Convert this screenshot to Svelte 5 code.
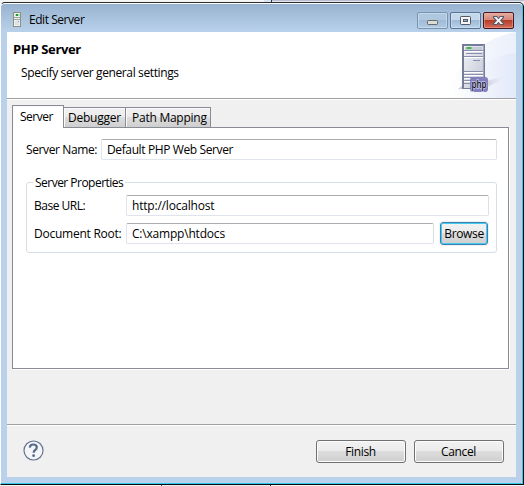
<script>
  let name = $state('Default PHP Web Server');
  let url = $state('http://localhost');
  let root = $state('C:\\xampp\\htdocs');
</script>

<div class="desktop">
  <div class="behind"><i></i><b></b></div>
  <section class="window">
    <header class="titlebar">
      <svg class="appicon" width="9" height="16" viewBox="0 0 9 16" shape-rendering="crispEdges">
        <rect x=".5" y=".5" width="7" height="14" rx="1" fill="#edf1ed" stroke="#8c917c" />
        <path d="M2 2h5v2H2z" fill="#b9dcb5" /><path d="M3 2h2v2H3z" fill="#189a36" />
        <path d="M1 5h6v1H1zM1 7h6v1H1z" fill="#9ba69a" />
        <path d="M2 9h4v4H2z" fill="#dce1e6" /><path d="M5 9h1v1H5z" fill="#8793a0" />
      </svg>
      <span class="caption">Edit Server</span>
      <div class="controls">
        <button class="ctl min" aria-label="Minimize"><svg width="29" height="15" viewBox="0 0 29 15"><rect x="9.5" y="7.5" width="10" height="4" rx=".7" fill="#deddd5" stroke="#676a6c" /></svg></button>
        <button class="ctl" aria-label="Maximize"><svg width="29" height="15" viewBox="0 0 29 15"><rect x="9.5" y="3.5" width="10" height="8" rx=".8" fill="#f5f5f5" stroke="#535866" /><rect x="12.5" y="6.5" width="4" height="2" fill="#8eb3da" stroke="#535866" /></svg></button>
        <button class="ctl close" aria-label="Close"><svg width="29" height="15" viewBox="0 0 29 15"><path d="M9.5 3.5h3.3l1.7 2 1.7-2h3.3v1l-2.8 3 2.8 3v1h-3.3l-1.7-2-1.7 2H9.500v-1l2.800-3-2.800-3z" fill="#f4f4f4" stroke="#555b69" stroke-width="1.100" /></svg></button>
      </div>
    </header>

    <main>
      <div class="banner">
        <div class="heading"><h1>PHP Server</h1><p>Specify server general settings</p></div>
        <svg class="art" width="80" height="66" viewBox="0 0 80 66">
          <defs>
            <linearGradient id="sweep" x1="0" x2="1"><stop offset="0" stop-color="#fff" /><stop offset="1" stop-color="#dfe7f8" /></linearGradient>
            <linearGradient id="face" x1="0" x2="1" y2="1"><stop stop-color="#eef0f5" /><stop offset="1" stop-color="#c4c8d6" /></linearGradient>
            <linearGradient id="shade" x1="0" x2="1"><stop stop-color="#bfb9cc" /><stop offset="1" stop-color="#dfe5f6" stop-opacity="0" /></linearGradient>
          </defs>
          <path d="M10 66C24 26 48 5 80 0v66z" fill="url(#sweep)" opacity=".65" />
          <path d="M16 66C32 38 53 24 80 21v45z" fill="url(#sweep)" opacity=".75" />
          <g transform="translate(1 0)">
            <path d="M45 50L69 44Q63 50 43 58z" fill="url(#shade)" />
            <path d="M21 57l4-3v3z" fill="#cecbd8" />
            <path d="M25 12h23v45H25z" fill="#757b9a" />
            <path d="M27 14h19v42H27z" fill="url(#face)" />
            <path d="M28 15h17v3H28z" fill="#c6cbd8" /><path d="M29.500 15h5v2h-5z" fill="#42b84b" />
            <path d="M27 18.500h19M27 24.500h19M27 39.500h19M27 42.500h19M27 45.500h19M27 48.500h19M27 51.500h19" stroke="#8a90ac" />
            <path d="M27 19.500h19M27 25.500h19M27 40.500h19M27 43.500h19M27 46.500h19M27 49.500h19" stroke="#fff" />
            <path d="M29 21.500h16M36 28.500h7" stroke="#8b8faf" />
            <path d="M46.500 13v43" stroke="#a0a5bd" />
            <rect x="33" y="45" width="18" height="15" rx="3" fill="#817fbe" />
            <text x="34.500" y="55.500" textLength="15" lengthAdjust="spacingAndGlyphs" class="halo">php</text>
            <text x="34.500" y="55.500" textLength="15" lengthAdjust="spacingAndGlyphs" class="php" aria-hidden="true">php</text>
          </g>
        </svg>
      </div>

      <div class="body">
        <nav>
          <button class="tab active">Server</button>
          <button class="tab debug">Debugger</button>
          <button class="tab mapping">Path Mapping</button>
        </nav>
        <div class="panel">
          <label class="row name"><span>Server Name:</span><input bind:value={name} /></label>
          <fieldset>
            <div class="legend">Server Properties</div>
            <label class="row"><span class="base">Base URL:</span><input bind:value={url} /></label>
            <div class="row docs">
              <label for="root" class="root">Document Root:</label><input id="root" bind:value={root} />
              <button class="push browse">Browse</button>
            </div>
          </fieldset>
        </div>
      </div>

      <footer>
        <svg width="21" height="21" viewBox="0 0 21 21">
          <circle cx="10.500" cy="10.500" r="9.500" fill="#f4f5f7" stroke="#657591" stroke-width="1.200" />
          <path d="M6.800 7.600Q7 4.500 10.300 4.500T13.800 7.200Q13.800 8.800 12.200 10Q10.700 11 10.700 12.800" fill="none" stroke="#566a8d" stroke-width="2.200" />
          <circle cx="10.600" cy="15.700" r="1.400" fill="#566a8d" />
        </svg>
        <div class="actions"><button class="push finish">Finish</button><button class="push cancel">Cancel</button></div>
      </footer>
    </main>
  </section>
  <div class="below"></div>
</div>

<style>
  :global(body) { margin: 0; overflow: hidden; }
  * { box-sizing: border-box; }
  .desktop { width: 524px; height: 486px; background: #f4f4f4; font: 12px/16px "Open Sans", "Noto Sans", sans-serif; color: #000; overflow: hidden; }
  button, input { font: inherit; color: inherit; margin: 0; padding: 0; outline: 0; letter-spacing: inherit; }
  .behind { height: 2px; display: flex; background: linear-gradient(#b9bed0 1px, #e4e5ef 1px); }
  .behind i { flex: 0 0 271px; background: linear-gradient(90deg, #f4f4f2 264px, #d6e5f5 264px); }
  .behind b { width: 1px; background: #333; }
  .window { height: 483px; border: 1px solid #080b0e; border-left-color: #fff; border-top-color: #292d32; border-radius: 5px 5px 0 0; background: #b9d1ea; box-shadow: inset -1px -1px #35c8e8, inset 0 1px #fff; padding: 1px 7px 7px 6px; }
  .titlebar { height: 28px; margin: 0 -6px; padding-left: 12px; display: flex; background: linear-gradient(#98b3d1, #b9d1ea); align-items: flex-start; border-radius: 4px 4px 0 0; }
  .appicon { margin-top: 8px; }
  .caption { margin: 8px 0 0 7px; letter-spacing: -.45px; }
  .controls { display: flex; margin: 8px 8px 0 auto; gap: 2px; }
  .ctl { height: 17px; width: 31px; border: 1px solid #597391; border-radius: 2px; padding: 0; display: flex; background: linear-gradient(#c5d8eb 48%, #9ebad5 50%, #b8d3ec); box-shadow: inset 0 0 0 1px #dcebf777; }
  .ctl.min { border-color: #7894b0; background: linear-gradient(#b0c8df 48%, #9fbbd6 50%, #b1cbe4); }
  .ctl.close { border-color: #481722; background: linear-gradient(#e5aaa0, #d78779 46%, #b73d27 50%, #d46d5c); box-shadow: inset 0 0 0 1px #eab5a477; }
  main { height: 445px; background: #f0f0f0; display: flex; flex-direction: column; }
  .banner { height: 68px; flex: none; background: #fff; border-bottom: 1px solid #fff; box-shadow: inset 0 -1px #a0a0a0; display: flex; justify-content: space-between; }
  .heading { padding: 8px 0 0 6px; }
  h1 { font-size: 13px; line-height: 18px; margin: 0; letter-spacing: -.35px; font-weight: 700; }
  p { margin: 7px 0 0 8px; letter-spacing: -.38px; }
  .php, .halo { font: 600 11.5px "Open Sans", sans-serif; fill: #101018; }
  .halo { stroke: #d0d0f0; stroke-width: 1.500px; fill: #d0d0f0; }
  .body { padding: 5px 6px 0 5px; height: 324px; flex: none; }
  nav { height: 23px; display: flex; align-items: flex-end; position: relative; z-index: 1; }
  .tab { height: 21px; border: 1px solid #898c95; border-left: 0; background: linear-gradient(#f2f2f2, #ebebeb 48%, #dddddd 50%, #cfcfcf); box-shadow: inset 1px 1px #fafafa; white-space: nowrap; line-height: 19px; text-align: left; padding-left: 4px; letter-spacing: -.25px; }
  .active { width: 52px; height: 23px; border: 1px solid #898c95; border-bottom: 0; background: #fff; line-height: 19px; padding: 0 0 2px 7px; letter-spacing: -.5px; }
  .debug { width: 62px; }
  .mapping { width: 85px; padding-left: 6px; }
  .panel { height: 242px; margin-top: -1px; background: #fff; border: 1px solid #898c95; box-shadow: 1px 1px #fff; padding: 11px 11px 0 13px; width: 497px; }
  .row { display: flex; align-items: center; height: 21px; letter-spacing: -.2px; }
  input { border: 1px solid #e0e4ed; border-top-color: #abadb3; border-right-color: #dbdfe6; border-radius: 2px; background: #fff; height: 21px; min-width: 0; flex: 1; padding-left: 5px; }
  .row > span, .row > label { white-space: nowrap; flex: none; }
  .name { letter-spacing: -.38px; }
  .name span { width: 75px; }
  fieldset { margin: 22px 0 0; min-width: 0; width: 471px; height: 71px; border: 1px solid #d5dfe5; border-radius: 3px; padding: 12px 7px 0; position: relative; }
  .legend { position: absolute; left: 6px; top: -9px; background: #fff; padding: 0 2px; line-height: 18px; letter-spacing: -.52px; white-space: nowrap; }
  .base, .root { width: 92px; }
  .base { letter-spacing: -.5px; }
  .docs { margin: 7px 1px 0 0; }
  .root { letter-spacing: -.25px; }
  .push { border: 1px solid #707070; border-radius: 3px; height: 23px; background: linear-gradient(#f2f2f2, #ebebeb 48%, #dddddd 50%, #cfcfcf); box-shadow: inset 0 0 0 1px #fcfcfc; line-height: 21px; text-align: center; }
  .browse { flex: 0 0 48px; margin-left: 6px; border-color: #3c7fb1; box-shadow: inset 0 0 0 1px #43caf0, 0 0 0 1px #f0f0f0; white-space: nowrap; letter-spacing: -.35px; }
  footer { flex: 1; border-top: 1px solid #a0a0a0; box-shadow: inset 0 1px #fff; display: flex; justify-content: space-between; padding: 15px 12px 0 15.500px; }
  footer > svg { margin-top: -.5px; }
  .actions { display: flex; gap: 8px; letter-spacing: -.35px; }
  .actions .push { width: 90px; padding-right: 1px; }
  .below { height: 1px; background: linear-gradient(90deg, #f4f4f4 161px, #555 161px 162px, #e9edf4 162px 270px, #333 270px 271px, #f4f4f4 271px); }
</style>
